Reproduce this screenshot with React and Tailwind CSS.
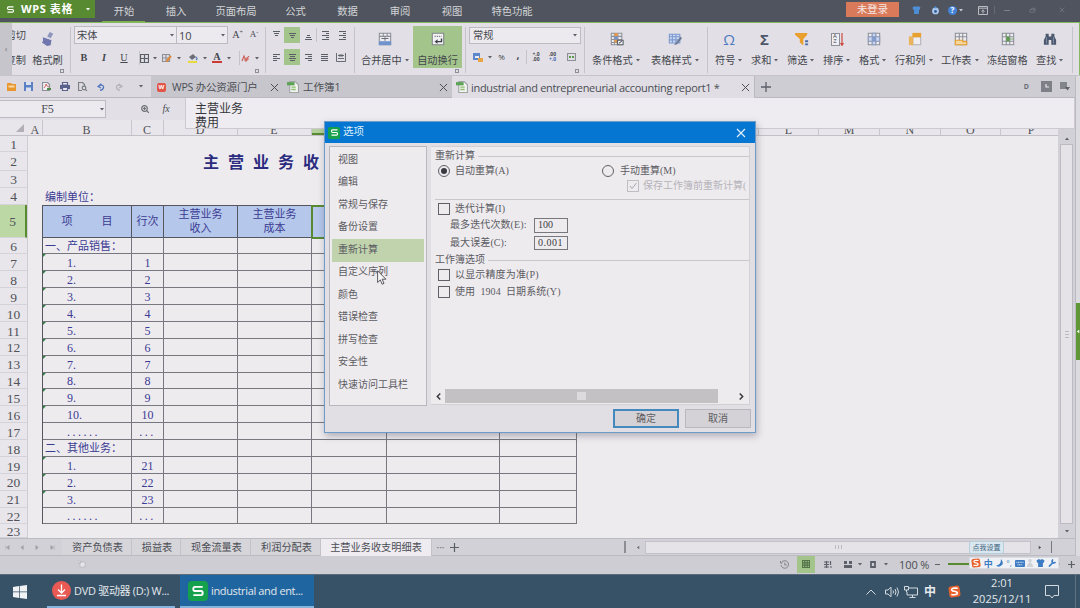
import React from "react";
import clsx from "clsx";

const SONG = "font-['Liberation_Serif','Noto_Sans_CJK_SC',serif]";

// small helpers
const Svg = ({ className = "w-3.5 h-3.5", box = "0 0 16 16", children }) => (
  <svg
    className={clsx("block shrink-0", className)}
    viewBox={box}
    fill="none"
    stroke="#5b5f68"
    strokeWidth="1.2"
  >
    {children}
  </svg>
);

const Arrow = ({ className = "text-[#5d6068]" }) => (
  <svg className={clsx("block shrink-0 w-1 h-[3px]", className)} viewBox="0 0 4 3">
    <path d="M0 0h4L2 2.6z" fill="currentColor" />
  </svg>
);

const Divider = ({ className = "h-12" }) => (
  <div className={clsx("w-px shrink-0 bg-[#c6c4ca]", className)} />
);

const Cell = ({ w, className, children }) => (
  <div className={clsx("flex shrink-0 items-center justify-center", w, className)}>
    {children}
  </div>
);

const Launcher = ({ className }) => (
  <div className={clsx("absolute bottom-[2px] h-1 w-1 border border-[#8d8f96]", className)} />
);

const Close = ({ className = "w-2 h-2 text-[#5e6067]" }) => (
  <svg className={clsx("block shrink-0", className)} viewBox="0 0 10 10">
    <path d="M1 1l8 8M9 1l-8 8" stroke="currentColor" strokeWidth="1.1" />
  </svg>
);

const WpsMark = ({ className }) => (
  <svg className={clsx("block shrink-0", className)} viewBox="0 0 12 12">
    <path
      d="M10 2.5H3.4Q2 2.5 2 4v.4Q2 6 3.4 6h5.2Q10 6 10 7.5V8Q10 9.5 8.6 9.5H2"
      fill="none"
      stroke="#fff"
      strokeWidth="1.6"
    />
  </svg>
);

const Sogou = ({ className }) => (
  <svg className={clsx("block shrink-0", className)} viewBox="0 0 14 14">
    <rect x="1" y="1" width="12" height="12" rx="2.5" fill="#e8622c" transform="rotate(-8 7 7)" />
    <path
      d="M10.5 3.5Q4 2.8 4 5q0 1.4 3 1.8 3.2.5 3 2.2-.2 2-6.5 1.2"
      fill="none"
      stroke="#fff"
      strokeWidth="1.7"
    />
  </svg>
);

const MENUS = [
  { name: "开始", w: "w-[52px]", active: true },
  { name: "插入", w: "w-[52px]" },
  { name: "页面布局", w: "w-[68px]" },
  { name: "公式", w: "w-[51px]" },
  { name: "数据", w: "w-[53px]" },
  { name: "审阅", w: "w-[52px]" },
  { name: "视图", w: "w-[52px]" },
  { name: "特色功能", w: "w-[68px]" },
];

const TitleBar = () => (
  <div className="flex h-[22px] shrink-0 bg-[#50545e] text-[10.3px] text-[#d3d4d8]">
    <div className="flex h-[18px] w-[95px] shrink-0 items-center bg-[#588a31] pl-[6px] text-white">
      <WpsMark className="h-[9px] w-[9px]" />
      <span className="ml-[6px] w-[60px] whitespace-nowrap pb-px text-[11px] font-bold leading-none tracking-[0.6px]">
        WPS 表格
      </span>
      <Arrow className="ml-[5px] text-white" />
    </div>
    <div className="flex w-[451px] shrink-0 pl-[3px]">
      {MENUS.map((m) => (
        <Cell key={m.name} w={m.w} className="relative h-[22px] shrink-0 pt-px leading-none">
          {m.name}
          {m.active && <div className="absolute bottom-0 left-1 h-px w-[43px] bg-[#79b24e]" />}
        </Cell>
      ))}
    </div>
    <div className="flex flex-1 items-start justify-end">
      <div className="mr-[13px] mt-[2px] flex h-[15px] w-[53px] items-center justify-center bg-[#d97b5b] leading-none text-[#f5e6e2]">
        未登录
      </div>
      <div className="flex h-[20px] w-[168px] items-center">
        <svg className="h-2 w-[9px]" viewBox="0 0 10 10">
          <path d="M3 0 0 2l1 3 1-.5V10h6V4.500l1 .5 1-3-3-2Q5 2 3 0z" fill="#4d8fd6" />
        </svg>
        <svg className="ml-[10px] h-[9px] w-[9px]" viewBox="0 0 10 10">
          <circle cx="5" cy="5.500" r="3.800" fill="#a9c8ee" />
          <path d="M5 0l2 2.500H3z" fill="#4d8fd6" />
          <circle cx="5" cy="6" r="1.500" fill="#345a92" />
        </svg>
        <div className="ml-[8px] flex h-[9px] w-[9px] items-center justify-center rounded-full bg-[#4384d8] text-[8px] font-bold leading-none text-white">
          ?
        </div>
        <Arrow className="ml-[2px] text-[#c9cad0]" />
        <svg className="ml-[15px] h-[9px] w-[10px]" viewBox="0 0 10 9" fill="none" stroke="#b8bac1">
          <path d="M.5.5h9v8h-9zM.5 2.200h9M5 7.500V4M3.400 5.400 5 3.900l1.600 1.500" />
        </svg>
        <Divider className="ml-[6px] h-2 !bg-[#676b75]" />
        <div className="ml-[9px] h-px w-[6px] bg-[#7d818a]" />
        <svg className="ml-[19px] h-[7px] w-[7px]" viewBox="0 0 8 8" fill="none" stroke="#71757f">
          <path d="M1 3h5v3H1zM3 3V1.500h4v3H6" />
        </svg>
        <Close className="ml-[23px] h-[6px] w-[6px] text-[#7d818a]" />
      </div>
    </div>
  </div>
);

// ribbon icons
const AlignIcon = ({ rows }) => (
  <svg className="block h-[9px] w-[9px]" viewBox="0 0 9 9">
    {rows.map(([x, y, w]) => (
      <rect key={y} x={x} y={y} width={w} height="1" fill="#5a5e66" />
    ))}
  </svg>
);

const GridIcon = ({ children }) => (
  <Svg className="h-[14px] w-[14px]">
    <path d="M1.500 1.500h13v13h-13zM1.500 5.500h13M1.500 10.500h13M6 1.500v13M10 1.500v13" fill="#edecf0" stroke="#8c8e98" />
    {children}
  </Svg>
);

const ICONS = {
  merge: (
    <Svg>
      <path d="M1.500 1.500h13v13h-13zM1.500 5h13M6 1.500V5M10.500 1.500V5" fill="#edecf0" stroke="#8c8e98" />
      <path d="M1 10.500h14V15H1z" fill="#6f94cd" stroke="none" />
      <path d="M4 7.500h8M8 6v4" stroke="#6c7078" />
    </Svg>
  ),
  wrap: (
    <Svg>
      <path d="M1.500 1.500h13v13h-13z" fill="#f1f0f3" stroke="#83868e" />
      <path d="M4 5h8" stroke="#83868e" strokeDasharray="1.500 1" />
      <path d="M12 7.500V11H6" stroke="#3b404a" strokeWidth="1.600" />
      <path d="M7.500 8.300v5.200L4 11z" fill="#3b404a" stroke="none" />
    </Svg>
  ),
  cond: (
    <Svg>
      <path d="M1.500 1.500h12v13h-12zM1.500 5h12M1.500 8.500h12M1.500 12h12M5 1.500v13M9 1.500v13" fill="#edecf0" stroke="#8c8e98" />
      <path d="M5 1.500h4V5H5zM5 8.500h4V12H5z" fill="#e69a4a" stroke="none" />
      <path d="M5 5h4v3.500H5z" fill="#6f94cd" stroke="none" />
      <path d="M8.500 9.500h6.500v5H8.500zM10 13l3.500-2.500" fill="#eeeef2" />
    </Svg>
  ),
  style: (
    <Svg>
      <path d="M1.500 2.500h12v10h-12zM1.500 5.500h12M1.500 9h12M5 2.500v10M9 2.500v10" fill="#ccd9f0" stroke="#7b98cf" />
      <path d="M14.500 5 9 12l-2 3 3.500-1L16 7z" fill="#707b96" stroke="none" />
    </Svg>
  ),
  omega: <span className="text-[15px] leading-none text-[#4e7bc0]">Ω</span>,
  sigma: <span className="text-[15px] font-bold leading-none text-[#4d566a]">Σ</span>,
  filter: (
    <Svg>
      <path d="M0 1h14v2L9.500 8v7.500L5.500 12V8L0 3z" fill="#e9a02f" stroke="none" />
      <path d="M11.500 9.500h3.500v2.200h-3.500zM11.500 13H15v2.200h-3.500z" fill="#4f6fa8" stroke="none" />
    </Svg>
  ),
  sort: (
    <div className="flex items-center">
      <div className="flex h-[13px] w-[9px] flex-col items-center justify-center border border-[#8c8e98] bg-[#efeef2] text-[6px] leading-[5.500px] text-[#45484f]">
        <span>A</span>
        <span>Z</span>
      </div>
      <Svg className="h-[13px] w-1" box="0 0 4 13">
        <path d="M2 0v12M.5 10 2 12.500 3.500 10" stroke="#cc4d43" />
      </Svg>
    </div>
  ),
  format: (
    <GridIcon>
      <path d="M6 5.500h4v5H6z" fill="#7f9fdb" stroke="#5c83c4" />
      <path d="M6 1.500h4v4H6zM6 10.500h4v4H6zM1.500 5.500H6v5H1.500zM10 5.500h4.500v5H10z" fill="#c9d5ee" stroke="#8d9cc0" />
    </GridIcon>
  ),
  rowcol: (
    <Svg>
      <path d="M5.500 5.500h9v9h-9z" fill="#eeedf1" stroke="#b1b2b9" />
      <path d="M5 1h10v5H5z" fill="#e9a02f" stroke="none" />
      <path d="M1 5h5v10H1z" fill="#eab35d" stroke="none" />
    </Svg>
  ),
  sheet: (
    <GridIcon>
      <path d="M1.500 9.500v5h13V11H10V9.500z" fill="#f3d79d" stroke="#e9a02f" />
    </GridIcon>
  ),
  freeze: (
    <GridIcon>
      <path d="M6 5.500h4v5H6z" fill="#5e9a4b" stroke="none" />
      <path d="M10 8h4.500M6 2v3" stroke="#79a56a" />
    </GridIcon>
  ),
  find: (
    <svg className="block h-[14px] w-[14px]" viewBox="0 0 16 16">
      <path d="M3 2h3.500v3h3V2H13v3l2 4v5.500H9.500V9h-3v5.500H1V9l2-4z" fill="#4c586f" />
      <path d="M4 6v7M12 6v7" stroke="#8b95a8" />
    </svg>
  ),
};

const RIBBON_TAIL = [
  { icon: "cond", label: "条件格式", w: "w-[59px]", iconX: "pr-[10px]" },
  { icon: "style", label: "表格样式", w: "w-[61px]", iconX: "pr-[14px]" },
  { divider: true },
  { icon: "omega", label: "符号", w: "w-[36px]", iconX: "pr-[8px]" },
  { icon: "sigma", label: "求和", w: "w-[36px]", iconX: "pr-[9px]" },
  { icon: "filter", label: "筛选", w: "w-[36px]", iconX: "pr-[6px]" },
  { icon: "sort", label: "排序", w: "w-[36px]", iconX: "pr-[8px]" },
  { icon: "format", label: "格式", w: "w-[36px]", iconX: "pr-[7px]" },
  { icon: "rowcol", label: "行和列", w: "w-[46px]", iconX: "pr-[7px]" },
  { icon: "sheet", label: "工作表", w: "w-[46px]", iconX: "pr-[7px]" },
  { icon: "freeze", label: "冻结窗格", w: "w-[49px]", iconX: "pr-[8px]", noArrow: true },
  { icon: "find", label: "查找", w: "w-[36px]", iconX: "pr-[9px]" },
];

const BigButton = ({ icon, label, w, iconX, noArrow }) => (
  <div className={clsx("flex shrink-0 flex-col", w)}>
    <div className={clsx("mt-[8px] flex h-4 items-center justify-center", iconX)}>{ICONS[icon]}</div>
    <div className="mt-[7px] flex h-3 items-center gap-[3px] whitespace-nowrap leading-none">
      {label}
      {!noArrow && <Arrow />}
    </div>
  </div>
);

const Ribbon = () => (
  <div className="flex h-[54px] shrink-0 border-b border-t border-b-[#c6c4ca] border-t-[#86b85f] bg-[#e2e0e6] text-[10.2px] text-[#44464d]">
    <div className="flex w-[12px] shrink-0 items-center justify-center bg-[#c6c5cb] text-[9px] text-[#7b7d84]">‹</div>
    {/* clipboard */}
    <div className="relative flex w-[58px] shrink-0">
      <div className="flex w-[14px] flex-col items-end overflow-hidden whitespace-nowrap pt-[7px] leading-none">
        <span className="h-[25px]">剪切</span>
        <span>复制</span>
      </div>
      <div className="ml-[6px] flex w-[31px] flex-col items-center">
        <Svg className="mt-[8px] h-4 w-[14px]">
          <path d="M10 0l4 2-3 5-4-2z" fill="#8d95bd" stroke="none" />
          <path d="M2 6l10 3-1 6-4 1-6-4q2-1 1-6z" fill="#7077ae" stroke="none" />
          <path d="M3 5l9.500 4" stroke="#d8d9ea" />
        </Svg>
        <span className="mt-[7px] flex h-3 items-center whitespace-nowrap leading-none">格式刷</span>
      </div>
      <Launcher className="right-[6px]" />
    </div>
    <Divider className="mt-1 h-[46px]" />
    {/* font */}
    <div className="relative w-[194px] shrink-0 pl-[3px] pt-[3px]">
      <div className="flex h-[18px] items-center">
        <div className="flex h-[18px] w-[103px] items-center justify-between border border-[#bdbbc2] bg-[#eceaef] px-[2px] leading-none">
          宋体 <Arrow />
        </div>
        <div className="-ml-px flex h-[18px] w-[52px] items-center justify-between border border-[#bdbbc2] bg-[#eceaef] px-[2px] text-[11px] leading-none">
          10 <Arrow />
        </div>
        <Cell w="w-[19px]" className={SONG}>A<sup className="text-[6px]">+</sup></Cell>
        <Cell w="w-[14px]" className={clsx(SONG, "!text-[9px]")}>A<sup className="text-[6px]">-</sup></Cell>
      </div>
      <div className={clsx("mt-[6px] flex h-4 items-center leading-none", SONG)}>
        <Cell w="w-5" className="font-bold">B</Cell>
        <Cell w="w-5" className="font-bold italic">I</Cell>
        <Cell w="w-5" className="underline">U</Cell>
        <Cell w="w-[5px]" />
        <Divider className="h-3.5" />
        <Cell w="w-[8px]">
          <Svg className="h-[9px] w-[9px]" box="0 0 9 9">
            <path d="M.5.500h8v8h-8zM4.500.500v8M.5 4.500h8" />
          </Svg>
        </Cell>
        <Cell w="w-[14px]"><Arrow /></Cell>
        <Cell w="w-[10px]">
          <Svg className="h-[9px] w-[10px]" box="0 0 10 9">
            <path d="M.5.500h7v7h-7zM4 .5v7M.5 4h7" stroke="#8c8e98" />
            <path d="M9 2 4.500 7.500" stroke="#e08a3a" strokeWidth="2" />
          </Svg>
        </Cell>
        <Cell w="w-[14px]"><Arrow /></Cell>
        <Cell w="w-[14px]">
          <Svg className="h-[10px] w-[10px]" box="0 0 10 10">
            <path d="M1 4l4-3 3 3-4 3z" fill="#6a6e78" stroke="none" />
            <path d="M8 4q2 2 0 3" stroke="#4f79b8" />
            <path d="M0 8h9v2H0z" fill="#e5d93c" stroke="none" />
          </Svg>
        </Cell>
        <Cell w="w-[10px]"><Arrow /></Cell>
        <Cell w="w-[14px]">
          <div className="border-b-2 border-[#cc3a35] px-px font-bold leading-[8px]">A</div>
        </Cell>
        <Cell w="w-[9px]"><Arrow /></Cell>
        <Cell w="w-[6px]" />
        <Divider className="h-3.5" />
        <Cell w="w-[10px]">
          <Svg className="h-[9px] w-[9px]" box="0 0 9 9">
            <path d="M1 7l2-5 2 5M8 2 4 7" stroke="#c9605d" />
            <path d="M6 3l2 2-3 3-2-2z" fill="#d2706c" stroke="none" />
          </Svg>
        </Cell>
        <Cell w="w-[14px]"><Arrow /></Cell>
      </div>
      <Launcher className="right-[6px]" />
    </div>
    <Divider className="mt-1 h-[46px]" />
    {/* alignment */}
    <div className="w-[88px] shrink-0 pl-[2px] pt-[4px]">
      <div className="flex h-4 items-center">
        <Cell w="w-4"><AlignIcon rows={[[1, 0, 7], [2, 2, 5], [3, 4, 3]]} /></Cell>
        <Cell w="w-4" className="h-4 bg-[#a3c48b]"><AlignIcon rows={[[1, 2, 7], [2, 4, 5], [3, 6, 3]]} /></Cell>
        <Cell w="w-4"><AlignIcon rows={[[3, 4, 3], [2, 6, 5], [1, 8, 7]]} /></Cell>
        <Divider className="h-3.5" />
        <Cell w="w-[17px]"><AlignIcon rows={[[1, 0, 7], [5, 2, 3], [1, 4, 7], [5, 6, 3], [1, 8, 7]]} /></Cell>
        <Cell w="w-4"><AlignIcon rows={[[1, 0, 7], [5, 2, 3], [1, 4, 7], [5, 6, 3], [1, 8, 7]]} /></Cell>
      </div>
      <div className="mt-[6px] flex h-4 items-center">
        <Cell w="w-4"><AlignIcon rows={[[1, 1, 7], [1, 3, 4], [1, 5, 7], [1, 7, 4]]} /></Cell>
        <Cell w="w-4" className="h-4 bg-[#a3c48b]"><AlignIcon rows={[[1, 1, 7], [2, 3, 5], [1, 5, 7], [2, 7, 5]]} /></Cell>
        <Cell w="w-4"><AlignIcon rows={[[1, 1, 7], [4, 3, 4], [1, 5, 7], [4, 7, 4]]} /></Cell>
        <Cell w="w-4"><AlignIcon rows={[[1, 1, 7], [1, 3, 7], [1, 5, 7], [1, 7, 7]]} /></Cell>
        <Cell w="w-[17px]">
          <Svg className="h-[9px] w-[10px]" box="0 0 10 9">
            <path d="M.5 0v8.500h9V0M2 2.500h6M2 5.500h6M4 1v3M6 1v3" strokeWidth=".9" />
          </Svg>
        </Cell>
      </div>
    </div>
    <Divider className="mt-1 h-[46px]" />
    <div className="relative flex w-[110px] shrink-0 pl-[6px]">
      <BigButton icon="merge" label="合并居中" w="w-[48px]" />
      <div className="ml-[4px] mt-[3px] flex h-[42px] w-[49px] flex-col items-center bg-[#a3c48b]">
        <div className="mt-[5px] flex h-4 items-center">{ICONS.wrap}</div>
        <div className="mt-[7px] flex h-3 items-center whitespace-nowrap leading-none">自动换行</div>
      </div>
      <Launcher className="right-[6px]" />
    </div>
    <Divider className="mt-1 h-[46px]" />
    {/* number */}
    <div className="relative w-[118px] shrink-0 pl-[3px] pt-[4px]">
      <div className="flex h-[17px] w-[112px] items-center justify-between border border-[#bdbbc2] bg-[#eceaef] px-[3px] leading-none">
        常规 <Arrow />
      </div>
      <div className="mt-[5px] flex h-4 items-center leading-none">
        <Cell w="w-[18px]">
          <Svg className="h-[9px] w-[10px]" box="0 0 10 9">
            <path d="M0 0h7v7H0z" fill="#5c86c9" stroke="none" />
            <path d="M2 3h4v2H2z" fill="#e7ecf6" stroke="none" />
            <path d="M5 5h5v4H5z" fill="#e9a543" stroke="none" />
          </Svg>
        </Cell>
        <Cell w="w-[6px]"><Arrow /></Cell>
        <Cell w="w-[17px]" className="text-[8px]">%</Cell>
        <Cell w="w-[16px]" className="pb-[3px] font-bold">,</Cell>
        <Divider className="h-3.5" />
        <Cell w="w-[18px]" className="flex-col text-[5px] font-bold leading-[5px]"><span>+.0</span><span>.00</span></Cell>
        <Cell w="w-[15px]" className="flex-col text-[5px] font-bold leading-[5px]"><span>.00</span><span className="text-[#3f67b5]">+.0</span></Cell>
        <Cell w="w-[22px]">
          <Svg className="h-[8px] w-[9px]" box="0 0 9 8">
            <path d="M.5.500h8v7h-8z" stroke="#8c8e98" />
            <path d="M2 4h2M5 4h2" stroke="#5e9a4b" strokeWidth="2" />
          </Svg>
        </Cell>
      </div>
      <Launcher className="right-[5px]" />
    </div>
    <Divider className="mt-1 h-[46px]" />
    <div className="flex flex-1 pl-[7px]">
      {RIBBON_TAIL.map((item) =>
        item.divider ? (
          <Divider key="divider" className="ml-[-5px] mr-[7px] mt-1 h-[46px]" />
        ) : (
          <BigButton key={item.label} {...item} />
        )
      )}
      <Divider className="mt-1 h-[46px]" />
    </div>
    <div className="w-px shrink-0 bg-[#86b85f]" />
  </div>
);

const SheetFileIcon = () => (
  <svg className="block h-[12px] w-[12px] shrink-0" viewBox="0 0 11 11">
    <path d="M2.500.500h5l3 3v7h-8z" fill="#f2f3f2" stroke="#a0a4a3" />
    <path d="M0 1h7v3H0z" fill="#5ea355" />
    <path d="M4 5h4v1.300H4zM4 7.200h4v1.300H4z" fill="#8fbf6d" />
  </svg>
);

const DocTabs = () => (
  <div className="flex h-[22px] w-[1075px] shrink-0 border-b border-[#bab9c0] bg-[#cecdd3] text-[10.5px] text-[#4b4d54]">
    <div className="flex w-[151px] shrink-0 items-center bg-[#dcdae0] pl-[2px]">
      <Cell w="w-[18px]">
        <Svg className="h-[9px] w-[9px]" box="0 0 9 9">
          <path d="M0 1h4l1 1h4v7H0z" fill="#e9962f" stroke="none" />
          <path d="M1.500 3.500h6v2h-6z" fill="#f6d9a7" stroke="none" />
        </Svg>
      </Cell>
      <Cell w="w-[17px]">
        <Svg className="h-[9px] w-[9px]" box="0 0 9 9">
          <path d="M0 0h9v9H0z" fill="#5b80c4" stroke="none" />
          <path d="M2 0h5v3H2zM2 5.500h5V9H2z" fill="#d9e1f1" stroke="none" />
        </Svg>
      </Cell>
      <Cell w="w-[19px]">
        <Svg className="h-[9px] w-[9px]" box="0 0 9 9">
          <path d="M.5.500h5l2 2v6h-7z" fill="#f1eff3" stroke="#8c8e98" />
          <path d="M2 6q2-2 2-4 1 3 3 3" stroke="#cc4d43" strokeWidth=".8" />
          <path d="M5 7h4" stroke="#4b8b44" strokeWidth="2" />
        </Svg>
      </Cell>
      <Cell w="w-[18px]">
        <Svg className="h-[9px] w-[10px]" box="0 0 10 9">
          <path d="M0 3h10v4H0z" fill="#59618c" stroke="none" />
          <path d="M2.500.500h5V3h-5zM2.500 5.500h5v3h-5z" fill="#eceaf0" stroke="#59618c" />
        </Svg>
      </Cell>
      <Cell w="w-[18px]">
        <Svg className="h-[9px] w-[10px]" box="0 0 10 9">
          <path d="M6.500 4V2.500l-2-2h-4v8H4" stroke="#7a7d85" />
          <circle cx="6" cy="6" r="1.800" stroke="#7a7d85" />
          <path d="M7.300 7.300 9 9" stroke="#7a7d85" />
        </Svg>
      </Cell>
      <Cell w="w-[18px]">
        <Svg className="h-[8px] w-[8px]" box="0 0 8 8">
          <path d="M3 7.500q4-1 3.500-4Q5.500 1 2 3M4.300.800 1 3.500 4 5" stroke="#5579bd" strokeWidth="1.300" />
        </Svg>
      </Cell>
      <Cell w="w-[18px]">
        <Svg className="h-[8px] w-[8px]" box="0 0 8 8">
          <path d="M5 7.500q-4-1-3.500-4Q2.500 1 6 3M3.700.800 7 3.500 4 5" stroke="#b3b2b9" />
        </Svg>
      </Cell>
      <Cell w="w-[22px]" className="pl-[4px]"><Arrow /></Cell>
    </div>
    <div className="flex w-[132px] shrink-0 items-center bg-[#c7c6cc] pl-[6px] pt-px">
      <div className="flex h-[9px] w-[9px] items-center justify-center rounded-[2px] bg-[#e25447] text-[6px] font-bold leading-none text-white">W</div>
      <span className="ml-[6px] w-[96px] whitespace-nowrap leading-none tracking-[-0.2px]">WPS 办公资源门户</span>
      <Close className="ml-[2px] h-[9px] w-[9px]" />
    </div>
    <div className="flex w-[169px] shrink-0 items-center bg-[#c7c6cc] pl-[4px] pt-px">
      <SheetFileIcon />
      <span className="ml-[4px] w-[136px] leading-none">工作簿1</span>
      <Close className="h-[9px] w-[9px]" />
    </div>
    <div className="flex h-[22px] w-[303px] shrink-0 items-center border-r border-[#bab9c0] bg-[#e0dee4] pl-[4px]">
      <SheetFileIcon />
      <span className="ml-[3px] w-[270px] whitespace-nowrap text-[11px] leading-none tracking-[-0.3px]">
        industrial and entrepreneurial accounting report1 *
      </span>
      <Close className="h-[9px] w-[9px]" />
    </div>
    <Cell w="w-[22px]">
      <Svg className="h-[10px] w-[10px]" box="0 0 10 10"><path d="M5 0v10M0 5h10" strokeWidth="1.300" /></Svg>
    </Cell>
    <div className="flex flex-1 items-center justify-end pr-[5px]">
      <span className="mr-[12px] text-[7px] font-bold leading-none text-[#6c6e75]">D</span>
      <div className="mr-[8px] flex h-[11px] w-[11px] items-center justify-center bg-[#7e8087]">
        <Svg className="h-[7px] w-[7px]" box="0 0 7 7"><path d="M3 1v3h3" stroke="#e8e7eb" /></Svg>
      </div>
      <Svg className="h-[9px] w-[10px]" box="0 0 10 9">
        <path d="M0 0h7v7H0z" fill="#83858c" stroke="none" />
        <path d="M5 5h5L7.500 8.500z" fill="#5e6067" stroke="none" />
      </Svg>
    </div>
  </div>
);

const FormulaBar = () => (
  <div className={clsx("relative z-10 flex h-[22px] w-[1075px] shrink-0 bg-[#e2e0e6] text-[#4b4d54]", SONG)}>
    <div className="mt-[2px] flex h-[18px] w-[106px] shrink-0 items-center border border-l-0 border-[#bdbbc2] bg-[#eceaef] text-[12px] leading-none">
      <span className="w-[100px] pr-[5px] text-center">F5</span>
      <Arrow />
    </div>
    <Cell w="w-[79px]" className="h-[21px] gap-[13px] pl-[20px]">
      <Svg className="h-[8px] w-[8px]" box="0 0 8 8">
        <circle cx="3.500" cy="3.500" r="2.800" stroke="#6d6f76" />
        <path d="M5.500 5.500 8 8M2 3.500h3M3.500 2v3" stroke="#6d6f76" />
      </Svg>
      <span className="text-[10px] italic leading-none">fx</span>
    </Cell>
    {/* expanded input drops over the column headers */}
    <div className="h-[31px] flex-1 border border-t-0 border-[#cccad0] bg-[#eeecf0] pl-[9px] pt-[4px] text-[12px] leading-[14px] text-[#35363b]">
      <p>主营业务</p>
      <p>费用</p>
    </div>
  </div>
);

const COLUMNS = [
  { name: "A", w: "w-[14.5px]" },
  { name: "B", w: "w-[89px]" },
  { name: "C", w: "w-[32px]" },
  { name: "D", w: "w-[74px]" },
  { name: "E", w: "w-[74px]" },
  { id: "F", w: "w-[75px]", active: true },
  { id: "G-K", w: "w-[372px]" },
  { name: "L", w: "w-[60.7px]" },
  { name: "M", w: "w-[60.7px]" },
  { name: "N", w: "w-[60.7px]" },
  { name: "O", w: "w-[60.7px]" },
  { name: "P", w: "w-[60.7px]" },
];

const ITEMS = [
  ["一、产品销售：", "", false],
  ["1.", "1", true],
  ["2.", "2", true],
  ["3.", "3", true],
  ["4.", "4", true],
  ["5.", "5", true],
  ["6.", "6", true],
  ["7.", "7", true],
  ["8.", "8", true],
  ["9.", "9", true],
  ["10.", "10", true],
  ["......", "...", true],
  ["二、其他业务：", "", false],
  ["1.", "21", true],
  ["2.", "22", true],
  ["3.", "23", true],
  ["......", "...", true],
];

const rowHeight = (n) => {
  if (n === 1) return "h-[15.500px]";
  if (n === 2) return "h-[19px]";
  if (n === 5) return "h-[33px]";
  if (n < 5) return "h-[17px]";
  if (n === 23) return "h-[13.500px]";
  return "h-[16.880px]";
};

const GRID = "grid grid-cols-[89px_32px_74px_74px_75px_113px_77px]";
const HEAD_CELL =
  "flex items-center justify-center border-b border-r border-[#55565f] text-center leading-[14px]";

const Sheet = () => (
  <div className={clsx("flex h-[418px] w-[1058px] shrink-0 flex-col overflow-hidden bg-[#eeebef]", SONG)}>
    {/* column headers */}
    <div className="flex h-[16px] shrink-0 border-b border-[#c3c1c7] bg-[#e8e6ea] text-[12px] leading-none text-[#515259]">
      <div className="flex w-[28px] shrink-0 items-end justify-end pb-[3px] pr-[4px]">
        <svg className="h-[8px] w-[8px]" viewBox="0 0 8 8"><path d="M8 0v8H0z" fill="#b1b0b6" /></svg>
      </div>
      {COLUMNS.map((c) => (
        <Cell
          key={c.name || c.id}
          w={c.w}
          className={clsx(
            "border-r border-[#c9c7cd] pt-[4px]",
            c.active && "border-b-2 !border-b-[#588a31] bg-[#b4d09c]"
          )}
        >
          {c.name}
        </Cell>
      ))}
    </div>
    <div className="flex min-h-0 flex-1">
      {/* row numbers */}
      <div className="w-[28px] shrink-0 border-r border-[#cfcdd3] bg-[#e8e6ea] text-[13.500px] leading-none text-[#515259]">
        {Array.from({ length: 23 }, (_, i) => i + 1).map((n) => (
          <div
            key={n}
            className={clsx(
              "flex items-center justify-center border-b border-[#d5d3d9] pt-[3px]",
              rowHeight(n),
              n === 5 && "border-r-2 !border-r-[#588a31] bg-[#bcd8a5]"
            )}
          >
            {n}
          </div>
        ))}
      </div>
      <div className="ml-[14px] w-[535px] shrink-0 text-[11px] text-[#3b3b93]">
        <div className="h-[15.500px]" />
        <div className="flex h-[19px] items-center whitespace-nowrap pl-[161px] pt-[3px] text-[16px] font-bold leading-none tracking-[9px] text-[#2b2b80]">
          主营业务收
        </div>
        <div className="h-[17px]" />
        <div className="flex h-[17px] items-center pl-[3px] pt-[3px] leading-none">编制单位：</div>
        <div className="border-l border-t border-[#55565f]">
          <div className={clsx("h-[32px] bg-[#b5c7ea]", GRID)}>
            <div className={clsx(HEAD_CELL, "gap-[29px]")}>
              <span>项</span>
              <span>目</span>
            </div>
            <div className={HEAD_CELL}>行次</div>
            <div className={HEAD_CELL}>主营业务<br />收入</div>
            <div className={HEAD_CELL}>主营业务<br />成本</div>
            <div className={clsx(HEAD_CELL, "outline-2 -outline-offset-1 outline-[#588a31]")} />
            <div className={HEAD_CELL} />
            <div className={HEAD_CELL} />
          </div>
          {ITEMS.map(([name, line, sub], i) => (
            <div key={i} className={clsx("h-[16.880px]", GRID)}>
              <div
                className={clsx(
                  "relative flex items-center whitespace-nowrap border-b border-r border-[#77777f] pt-[2px] leading-none",
                  sub ? "pl-[24px] text-[12px]" : "pl-[2px]",
                  name === "......" && "tracking-[2.500px]"
                )}
              >
                {sub && line !== "..." && (
                  <div className="absolute left-0 top-0 border-r-[3px] border-t-[3px] border-r-transparent border-t-[#2d8040]" />
                )}
                {name}
              </div>
              <div
                className={clsx(
                  "flex items-center justify-center border-b border-r border-[#77777f] pt-[2px] text-[12px] leading-none",
                  line === "..." && "tracking-[2.500px]"
                )}
              >
                {line}
              </div>
              {[0, 1, 2, 3, 4].map((c) => (
                <div key={c} className="border-b border-r border-[#77777f]" />
              ))}
            </div>
          ))}
        </div>
      </div>
    </div>
  </div>
);

const VerticalScroll = () => (
  <div className="flex w-[17px] shrink-0 flex-col items-center bg-[#d2d1d7] text-[#5d6068]">
    <Cell w="w-full" className="h-[24px] pt-[13px]"><Arrow className="rotate-180" /></Cell>
    <div className="flex w-[13px] flex-1 flex-col items-center justify-center gap-[2px] border border-[#bdbbc2] bg-[#e5e3e8]">
      <div className="h-px w-1 bg-[#bbb9c0]" />
      <div className="h-px w-1 bg-[#bbb9c0]" />
      <div className="h-px w-1 bg-[#bbb9c0]" />
    </div>
    <Cell w="w-full" className="h-[14px]"><Arrow /></Cell>
  </div>
);

const SHEET_TABS = [
  { name: "资产负债表", w: "w-[70px]" },
  { name: "损益表", w: "w-[49px]" },
  { name: "现金流量表", w: "w-[70px]" },
  { name: "利润分配表", w: "w-[70px]" },
];

const SheetTabs = () => (
  <div className="relative flex h-[18px] w-[1075px] shrink-0 items-center border-b border-t border-[#bcbbc2] bg-[#d2d1d7] text-[10.2px] leading-none text-[#4b4d54]">
    <div className="flex w-[62px] shrink-0 items-center gap-[10px] pl-[5px]">
      {["M1 0v5M5 0v5L2 2.500z", "M4 0v5L1 2.500z", "M1 0v5l3-2.500z", "M1 0v5l3-2.500zM5 0v5"].map((d) => (
        <svg key={d} className="h-[5px] w-[5px]" viewBox="0 0 6 5">
          <path d={d} fill="#a09fa7" stroke="#a09fa7" strokeWidth=".6" />
        </svg>
      ))}
    </div>
    {SHEET_TABS.map((t) => (
      <Cell key={t.name} w={t.w} className="h-4 border-r border-[#c3c2c8] bg-[#d6d5da] pl-[2px]">{t.name}</Cell>
    ))}
    <Cell w="w-[111px]" className="h-[17px] border-r border-[#c3c2c8] bg-[#eeecf0]">主营业务收支明细表</Cell>
    <Cell w="w-[17px]" className="text-[#6c6e75]">···</Cell>
    <Svg className="ml-[1px] h-[9px] w-[9px]" box="0 0 9 9"><path d="M4.500 0v9M0 4.500h9" /></Svg>
    <div className="ml-[165px] h-3 w-[2px] bg-[#8d8e95]" />
    <Arrow className="ml-[10px] rotate-90 text-[#6c6e75]" />
    <div className="ml-[5px] flex h-[13px] w-[386px] items-center justify-center gap-[2px] border border-[#c3c2c8] bg-[#e5e3e8]">
      <div className="h-1 w-px bg-[#bbb9c0]" />
      <div className="h-1 w-px bg-[#bbb9c0]" />
      <div className="h-1 w-px bg-[#bbb9c0]" />
    </div>
    <Arrow className="ml-[7px] -rotate-90 text-[#4b4d54]" />
    <div className="ml-[9px] h-3 w-px bg-[#77797f]" />
    {/* input method hint */}
    <div className="absolute left-[969px] top-[2px] z-10 flex h-[13px] w-[35px] items-center justify-center rounded-[2px] border border-[#b5cfdd] bg-[#dbe7ee] text-[7px] leading-none text-[#3c6480]">
      点我设置
    </div>
  </div>
);

const StatusBar = () => (
  <div className="relative flex h-[18px] shrink-0 items-center bg-[#cecdd3] pb-[2px] text-[#4b4d54]">
    <Svg className="ml-[78px] h-[8px] w-[8px]" box="0 0 8 8">
      <path d="M2 2h5v5H2zM0 1h3v2H0z" fill="#e6e5e9" stroke="#b1b0b7" strokeWidth=".6" />
    </Svg>
    <div className="ml-[694px] flex items-center">
      <Svg className="h-[9px] w-[9px]" box="0 0 9 9">
        <path d="M1.500 2.500A3.800 3.800 0 1 1 1 5M.5 1v2h2M4.800 2.500V5h2" stroke="#7a7c83" strokeWidth=".9" />
      </Svg>
      <Cell w="w-[18px]" className="ml-[8px] h-[17px] bg-[#a3c48b]">
        <Svg className="h-[8px] w-[8px]" box="0 0 8 8">
          <path d="M.5.500h7v7h-7zM.5 2.800h7M.5 5.200h7M2.800.5v7M5.200.5v7" stroke="#54754a" />
        </Svg>
      </Cell>
      <Cell w="w-[25px]">
        <Svg className="h-[7px] w-[8px]" box="0 0 8 7"><path d="M0 1h5M0 3.500h5M0 6h5M2.500 0v7M6.500 0v4M6 6h2" /></Svg>
      </Cell>
      <Cell w="w-[16px]">
        <Svg className="h-[7px] w-[8px]" box="0 0 8 7">
          <path d="M0 0h3v3H0zM5 0h3v3H5zM0 4h8v3H0z" fill="#5d6068" stroke="none" />
        </Svg>
      </Cell>
      <Cell w="w-[8px]"><Arrow /></Cell>
      <Cell w="w-[18px]">
        <Svg className="h-[7px] w-[6px]" box="0 0 6 7"><path d="M1 1h4v5H1z" strokeWidth="1.800" /></Svg>
      </Cell>
      <Cell w="w-[8px]"><Arrow /></Cell>
      <span className="ml-[9px] w-[35px] whitespace-nowrap text-[11px] leading-none tracking-[-0.1px]">100 %</span>
      <div className="ml-px h-px w-[5px] bg-[#5d6068]" />
      <div className="ml-[8px] h-[2px] w-[112px] bg-gradient-to-r from-[#588a31] from-20% to-[#b3b2b9] to-20%" />
      <Svg className="ml-[8px] h-[7px] w-[7px]" box="0 0 7 7"><path d="M3.500 0v7M0 3.500h7" /></Svg>
    </div>
    {/* floating input method bar */}
    <div className="absolute left-[969px] top-px z-10 flex h-[12px] w-[90px] items-center justify-between border border-[#d9dce2] bg-[#eff1f5] pl-px pr-[2px] text-[#3d7cc4]">
      <Sogou className="h-[10px] w-[10px]" />
      <span className="text-[9px] font-bold leading-none">中</span>
      <svg className="h-[8px] w-[8px]" viewBox="0 0 8 8"><path d="M5 0q4 5-.5 7Q2 8.500 0 6.500 5 6 5 0z" fill="currentColor" /></svg>
      <span className="text-[8px] leading-none">°,</span>
      <svg className="h-[7px] w-[10px]" viewBox="0 0 10 7">
        <rect width="10" height="7" rx="1" fill="currentColor" />
        <path d="M1.500 2.300h7M2.500 4.800h5" stroke="#eff1f5" strokeDasharray="1 .6" />
      </svg>
      <svg className="h-[8px] w-[6px]" viewBox="0 0 6 8"><path d="M3 0a1.500 1.500 0 0 1 0 3.500Q6 4 6 8H0q0-4 3-4.500A1.500 1.500 0 0 1 3 0z" fill="#cfd2d8" /></svg>
      <svg className="h-[8px] w-[9px]" viewBox="0 0 10 10"><path d="M3 0 0 2l1 3 1-.5V10h6V4.500l1 .5 1-3-3-2Q5 2 3 0z" fill="currentColor" /></svg>
      <svg className="h-[8px] w-[8px]" viewBox="0 0 8 8"><path d="M1 7.500 5 3.500M5 .500Q3.500 2 4.500 3.500 6 4.500 7.500 3" stroke="currentColor" strokeWidth="1.700" fill="none" /></svg>
    </div>
  </div>
);

const Taskbar = () => (
  <div className="flex h-[34px] shrink-0 items-center border-t border-[#5c6c7c] bg-[#375267] text-[11px] leading-none text-[#e4e8ec]">
    <Cell w="w-[40px]">
      <svg className="h-[14px] w-[14px]" viewBox="0 0 14 14">
        <path d="M0 2l6-1v5.600H0zM6.700.900 14 0v6.600H6.700zM0 7.300h6v5.600l-6-.9zM6.700 7.300H14V14l-7.300-1z" fill="#f0f2f4" />
      </svg>
    </Cell>
    <div className="ml-[7px] flex h-[33px] w-[128px] shrink-0 items-center border-b-2 border-[#85b5dd] pl-[5px]">
      <svg className="h-[19px] w-[19px] shrink-0" viewBox="0 0 19 19">
        <circle cx="9.500" cy="9.500" r="9.500" fill="#ea5a55" />
        <path d="M9.500 3.500v8M6 8.500l3.500 3.500L13 8.500M5 14.500h9" stroke="#fff" strokeWidth="1.300" fill="none" />
      </svg>
      <span className="ml-[3px] whitespace-nowrap tracking-[-0.3px]">DVD 驱动器 (D:) W...</span>
    </div>
    <div className="ml-[5px] flex h-[33px] w-[134px] shrink-0 items-center border-b-2 border-[#85b5dd] bg-[#1f65a0] pl-[8px]">
      <div className="flex h-[20px] w-[20px] shrink-0 items-center justify-center rounded-[4px] bg-[#15a04b]">
        <WpsMark className="h-[14px] w-[14px]" />
      </div>
      <span className="ml-[3px] whitespace-nowrap tracking-[-0.35px]">industrial and ent...</span>
    </div>
    <div className="flex flex-1 items-center justify-end">
      <svg className="h-[6px] w-[10px]" viewBox="0 0 10 6"><path d="M.5 5.500 5 1l4.500 4.500" stroke="#d3dae0" fill="none" /></svg>
      <svg className="ml-[9px] h-[12px] w-[14px]" viewBox="0 0 14 12" fill="none" stroke="#d3dae0">
        <path d="M.5 4v4H3l3 2.800V1.200L3 4zM8 4.500q1 1.500 0 3M10 3q2 3 0 6M12 1.500q3 4.500 0 9" />
      </svg>
      <svg className="ml-[5px] h-[12px] w-[14px]" viewBox="0 0 14 12" fill="none" stroke="#d3dae0">
        <path d="M5 2h8.500v7H3V6M.5.500h4v3.500h-4zM2.500 4v2M5.500 11.500h6M8.500 9v2.500" />
      </svg>
      <span className="ml-[6px] text-[12px] font-bold">中</span>
      <Sogou className="ml-[12px] h-[13px] w-[13px]" />
      <div className="ml-[5px] flex w-[72px] flex-col items-center gap-[5px] pb-[3px]">
        <span>2:01</span>
        <span>2025/12/11</span>
      </div>
      <svg className="ml-[7px] h-[14px] w-[14px]" viewBox="0 0 14 14" fill="none" stroke="#d3dae0">
        <path d="M.5.500h13v10H9l-2 2.500-2-2.500H.5z" />
      </svg>
      <div className="ml-[16px] mr-[4px] h-[33px] w-px bg-[#5e7485]" />
    </div>
  </div>
);

const OPTION_PAGES = [
  "视图",
  "编辑",
  "常规与保存",
  "备份设置",
  "重新计算",
  "自定义序列",
  "颜色",
  "错误检查",
  "拼写检查",
  "安全性",
  "快速访问工具栏",
];

const Check = ({ checked, disabled }) => (
  <div
    className={clsx(
      "flex h-[12px] w-[12px] shrink-0 items-center justify-center border",
      disabled ? "border-[#c0bec4]" : "border-[#5f6067]"
    )}
  >
    {checked && (
      <svg className="h-2 w-2" viewBox="0 0 8 8"><path d="M1 4l2 2.500L7.500 1" stroke="#a9a7ae" fill="none" /></svg>
    )}
  </div>
);

const Radio = ({ checked }) => (
  <div className="flex h-[12px] w-[12px] shrink-0 items-center justify-center rounded-full border border-[#5f6067]">
    {checked && <div className="h-[6px] w-[6px] rounded-full bg-[#3a3b40]" />}
  </div>
);

const GroupTitle = ({ children }) => (
  <div className="flex h-[12px] items-center gap-[3px] whitespace-nowrap">
    {children}
    <div className="h-px flex-1 bg-[#c9c7cc]" />
  </div>
);

const OptionsDialog = () => (
  <div
    className={clsx(
      "absolute left-[324px] top-[121px] z-20 flex h-[312px] w-[432px] flex-col border border-[#6d9cc8] bg-[#e2dfe4] text-[10px] leading-none text-[#5c5c62] shadow-[1px_3px_7px_rgba(60,60,80,0.35)]",
      SONG
    )}
  >
    <div className="flex h-[21px] shrink-0 items-center bg-[#0577d3] pl-[3px] pr-[9px] text-[#dfeefa]">
      <div className="flex h-[12px] w-[12px] items-center justify-center rounded-[2px] bg-[#15a04b]">
        <WpsMark className="h-[9px] w-[9px]" />
      </div>
      <span className="ml-[3px] flex-1 text-[10.500px]">选项</span>
      <Close className="h-[10px] w-[10px] text-[#e8f2fb]" />
    </div>
    <div className="flex shrink-0 pl-[4px] pt-[3px]">
      <div className="h-[260px] w-[98px] border border-[#b9b7bd] bg-[#eeebef] pl-[2px] pt-[2px]">
        {OPTION_PAGES.map((page) => (
          <div
            key={page}
            className={clsx(
              "flex h-[22.500px] w-[92px] items-center whitespace-nowrap pb-px pl-[6px]",
              page === "重新计算" && "bg-[#c0d3ad]"
            )}
          >
            {page}
          </div>
        ))}
      </div>
      <div className="ml-[4px] flex h-[259px] w-[319px] flex-col overflow-hidden border border-l-0 border-[#d2d0d5] bg-[#eeebef]">
        <div className="h-[238px] pl-[4px] pt-[3px]">
          <GroupTitle>重新计算</GroupTitle>
          <div className="mt-px flex h-[15px] items-center pl-[3px]">
            <Radio checked />
            <span className="ml-[5px] w-[147px]">自动重算(A)</span>
            <Radio />
            <span className="ml-[6px]">手动重算(M)</span>
          </div>
          <div className="flex h-[15px] items-center overflow-hidden whitespace-nowrap pl-[192px] text-[#b5b3b9]">
            <Check checked disabled />
            <span className="ml-[4px]">保存工作簿前重新计算(</span>
          </div>
          <div className="mt-[6px] h-px bg-[#c9c7cc]" />
          <div className="mt-[2px] flex h-[14px] items-center pl-[3px]">
            <Check />
            <span className="ml-[5px]">迭代计算(I)</span>
          </div>
          <div className="flex h-[18px] items-center pl-[15px]">
            <span className="w-[84px] whitespace-nowrap tracking-[0.1px]">最多迭代次数(E):</span>
            <div className="flex h-[15px] w-[34px] items-center border border-[#77777e] pl-[3px] text-[#3a3b40]">100</div>
          </div>
          <div className="flex h-[18px] items-center pl-[15px]">
            <span className="w-[84px] tracking-[0.1px]">最大误差(C):</span>
            <div className="flex h-[14px] w-[34px] items-center border border-[#77777e] pl-[3px] tracking-[0.500px] text-[#3a3b40]">0.001</div>
          </div>
          <div className="mt-[2px]">
            <GroupTitle>工作簿选项</GroupTitle>
          </div>
          <div className="flex h-[17px] items-center pl-[3px]">
            <Check />
            <span className="ml-[5px] tracking-[0.15px]">以显示精度为准(P)</span>
          </div>
          <div className="flex h-[17px] items-center pl-[3px]">
            <Check />
            <span className="ml-[5px] tracking-[0.1px]">使用 &nbsp;1904&nbsp; 日期系统(Y)</span>
          </div>
        </div>
        <div className="mt-[4px] flex h-[14px] items-center">
          <Cell w="w-[14px]">
            <Svg className="h-[7px] w-[5px]" box="0 0 4 6"><path d="M3.500.500 1 3l2.500 2.500" stroke="#3a3b40" strokeWidth="1.300" /></Svg>
          </Cell>
          <div className="flex h-[14px] w-[273px] items-center justify-center bg-[#c3c1c4]">
            <div className="h-2 w-[9px] bg-[#dcdadd]" />
          </div>
          <Cell w="w-[31px]" className="pl-[15px]">
            <Svg className="h-[7px] w-[5px]" box="0 0 4 6"><path d="M.5.500 3 3 .5 5.500" stroke="#3a3b40" strokeWidth="1.300" /></Svg>
          </Cell>
        </div>
      </div>
    </div>
    <div className="mt-[3px] flex justify-end gap-[6px] pr-[4px]">
      <div className="flex h-[19px] w-[66px] items-center justify-center border-2 border-[#4389bd] bg-[#d4d2d6]">确定</div>
      <div className="flex h-[19px] w-[66px] items-center justify-center border border-[#bab8be] bg-[#d4d2d6]">取消</div>
    </div>
  </div>
);

const Cursor = () => (
  <svg className="absolute left-[377px] top-[270px] z-30 h-[15px] w-[10px]" viewBox="0 0 10 15">
    <path d="M.6.800v11.700l2.700-2.600 1.800 4.300 1.900-.8-1.800-4.200h3.700z" fill="#f5f4f6" stroke="#47484e" strokeWidth=".9" />
  </svg>
);

const App = () => {
  return (
    <div className="relative flex h-[608px] w-[1080px] flex-col overflow-hidden bg-[#d8d7dc] font-['Open_Sans','Noto_Sans_CJK_SC',sans-serif]">
      <TitleBar />
      <Ribbon />
      <div className="flex h-[480px] shrink-0">
        <div className="flex w-[1075px] shrink-0 flex-col">
          <DocTabs />
          <FormulaBar />
          <div className="flex h-[418px] shrink-0">
            <Sheet />
            <VerticalScroll />
          </div>
          <SheetTabs />
        </div>
        {/* side panel handle */}
        <div className="flex w-[5px] items-center border-l border-[#bdbbc2] bg-[#dcdbe0] pt-[30px]">
          <div className="flex h-[57px] w-[4px] items-center justify-center bg-[#5f9636]">
            <Arrow className="rotate-90 text-white" />
          </div>
        </div>
      </div>
      <StatusBar />
      <Taskbar />
      <OptionsDialog />
      <Cursor />
    </div>
  );
};

export default App;
